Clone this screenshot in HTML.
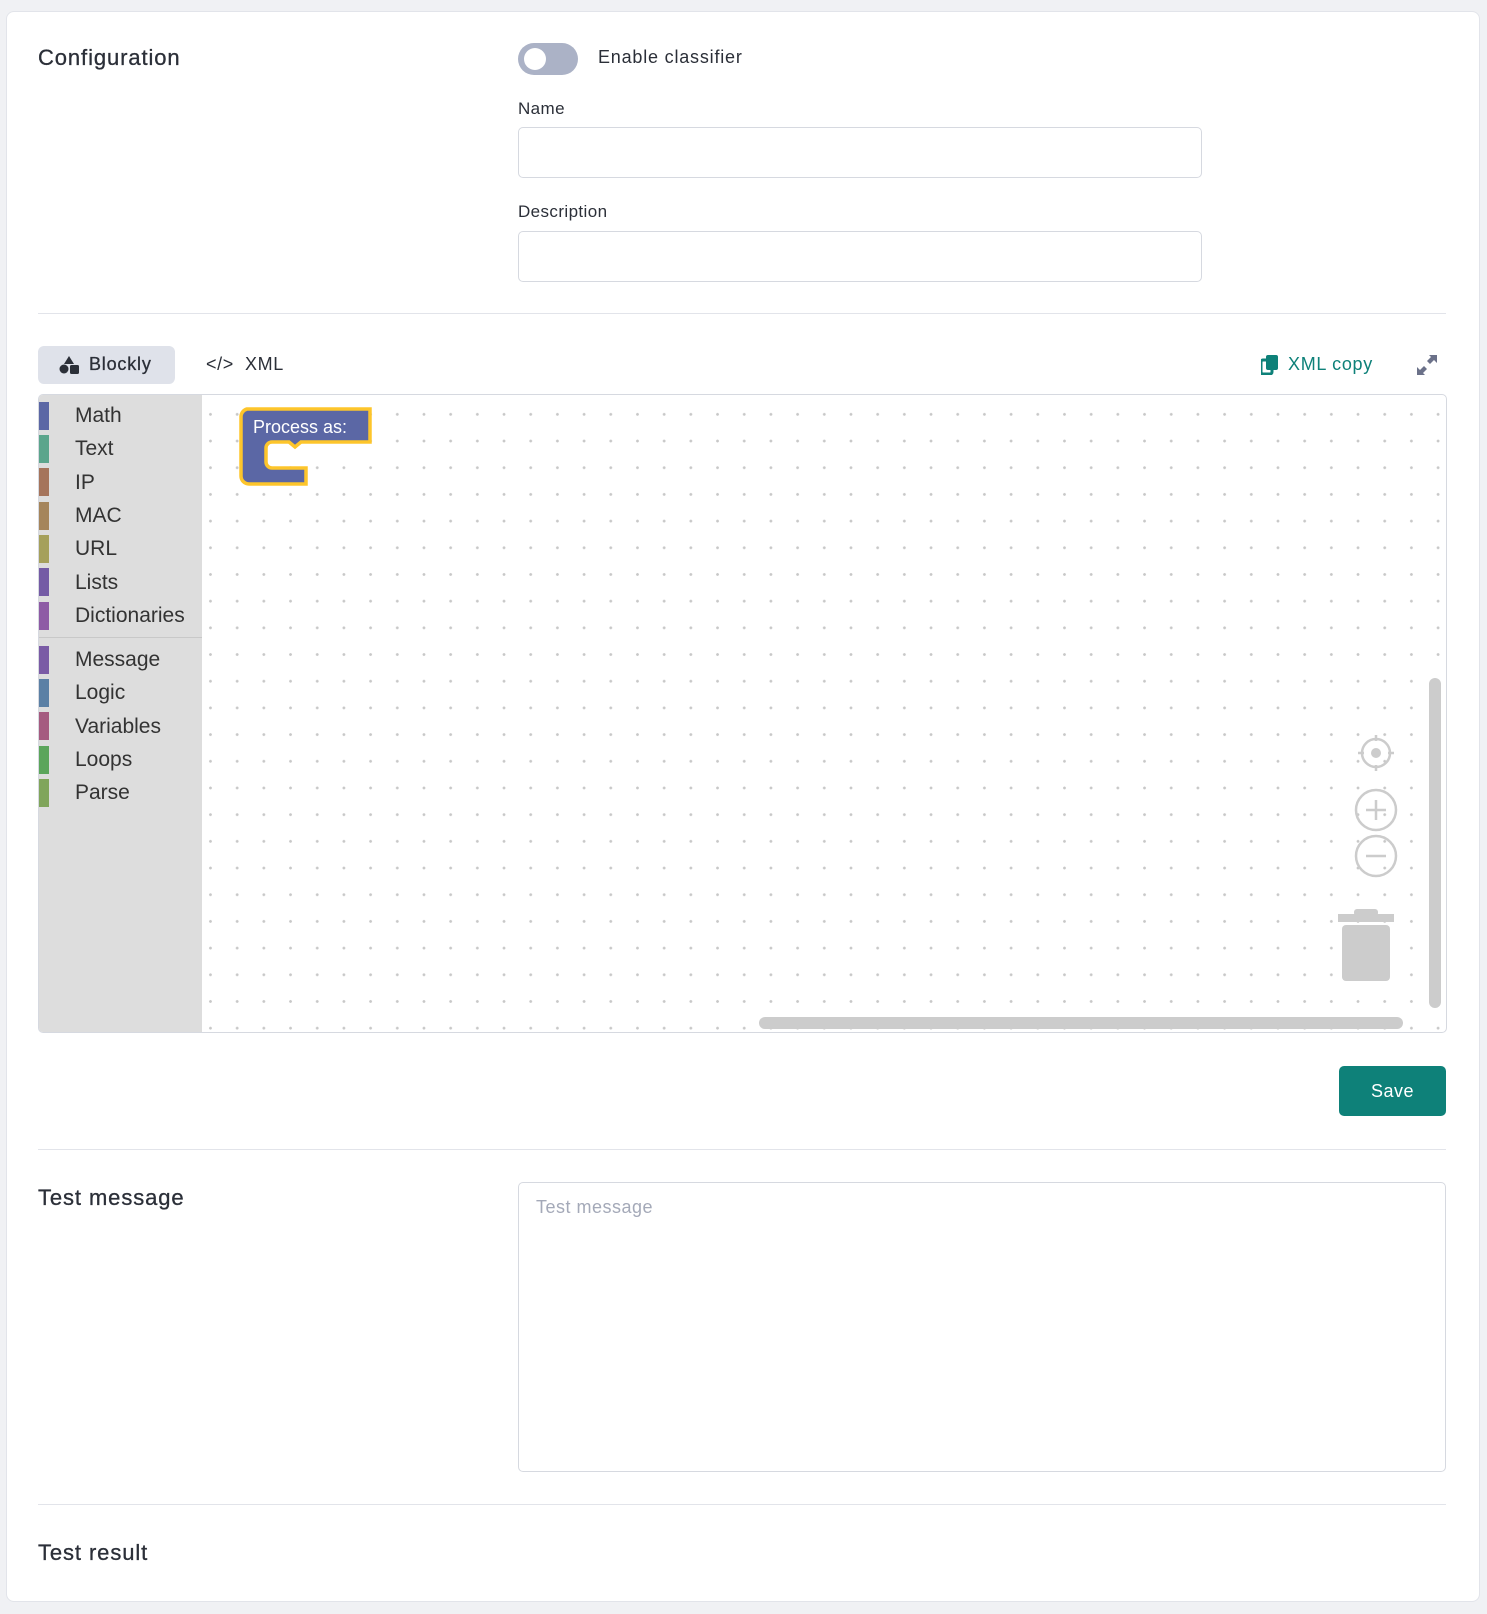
<!DOCTYPE html>
<html><head><style>
body{margin:0;background:#f0f1f4;font-family:"Liberation Sans",sans-serif;color:#2b2f38;}
.card{position:absolute;left:6px;top:11px;width:1472px;height:1589px;background:#fff;border:1px solid #e2e4ea;border-radius:8px;}
.abs{position:absolute}
h2{position:absolute;margin:0;font-weight:normal;font-size:22px;color:#2b2f38;letter-spacing:0.9px;-webkit-text-stroke:0.3px #2b2f38}
.lbl{position:absolute;font-size:17px;color:#2b2f38;letter-spacing:0.4px}
.inp{position:absolute;border:1px solid #d6d9e0;border-radius:5px;background:#fff}
.hr{position:absolute;left:38px;width:1408px;height:1px;background:#e2e4ea}
.tb{position:absolute;left:0;width:10px;height:28px}
.ti{position:absolute;left:36px;font-size:21px;color:#333}
</style></head><body>
<div class="card"></div>
<h2 style="left:38px;top:45px">Configuration</h2>
<div class="abs" style="left:518px;top:43px;width:60px;height:32px;border-radius:16px;background:#abb2c6"></div>
<div class="abs" style="left:524px;top:48px;width:22px;height:22px;border-radius:50%;background:#fff"></div>
<div class="lbl" style="left:598px;top:47px;font-size:18px;letter-spacing:0.8px">Enable classifier</div>
<div class="lbl" style="left:518px;top:99px">Name</div>
<div class="inp" style="left:518px;top:127px;width:682px;height:49px"></div>
<div class="lbl" style="left:518px;top:202px">Description</div>
<div class="inp" style="left:518px;top:231px;width:682px;height:49px"></div>
<div class="hr" style="top:313px"></div>
<div class="abs" style="left:38px;top:346px;width:137px;height:38px;border-radius:6px;background:#dfe2ea"></div>
<svg class="abs" style="left:59px;top:356px" width="20" height="18" viewBox="0 0 20 18"><polygon points="10,0 15,8 5,8" fill="#2b2f38"/><circle cx="5" cy="13" r="4.5" fill="#2b2f38"/><rect x="11" y="9" width="9" height="9" rx="1.5" fill="#2b2f38"/></svg>
<div class="lbl" style="left:89px;top:354px;font-size:18px;letter-spacing:0.8px;-webkit-text-stroke:0.3px #2b2f38">Blockly</div>
<div class="lbl" style="left:206px;top:354px;font-size:18px;letter-spacing:0.6px">&lt;/&gt;&nbsp; XML</div>
<svg class="abs" style="left:1261px;top:355px" width="18" height="20" viewBox="0 0 18 20"><rect x="0" y="5" width="11" height="14" rx="2" fill="none" stroke="#0e8179" stroke-width="3"/><rect x="5" y="0" width="12" height="15" rx="2" fill="#0e8179"/></svg>
<div class="lbl" style="left:1288px;top:354px;font-size:18px;color:#0e8179;letter-spacing:0.7px">XML copy</div>
<svg class="abs" style="left:1415px;top:353px" width="24" height="24" viewBox="0 0 24 24"><path d="M14 2h8v8l-3-3-4 4-3-3 4-4zM10 22H2v-8l3 3 4-4 3 3-4 4z" fill="#6b7189"/></svg>
<div class="abs" style="left:38px;top:394px;width:1407px;height:637px;border:1px solid #d6d9e0;border-radius:5px;overflow:hidden;background-color:#fff;background-image:radial-gradient(circle,#c8c8c8 1.2px,transparent 1.6px);background-size:26.7px 26.7px;background-position:-2px 6px">
 <div class="abs" style="left:0;top:0;width:163px;height:640px;background:#dddddd">
  <div class="tb" style="top:7px;background:#5b67a5"></div><div class="ti" style="top:9px">Math</div>
  <div class="tb" style="top:40px;background:#5ba58c"></div><div class="ti" style="top:42px">Text</div>
  <div class="tb" style="top:73px;background:#a5745b"></div><div class="ti" style="top:76px">IP</div>
  <div class="tb" style="top:107px;background:#a5855b"></div><div class="ti" style="top:109px">MAC</div>
  <div class="tb" style="top:140px;background:#a5a05b"></div><div class="ti" style="top:142px">URL</div>
  <div class="tb" style="top:173px;background:#745ba5"></div><div class="ti" style="top:176px">Lists</div>
  <div class="tb" style="top:207px;background:#8e5ba5"></div><div class="ti" style="top:209px">Dictionaries</div>
  <div class="abs" style="left:0;top:242px;width:163px;height:1px;background:#c8c8c8"></div>
  <div class="tb" style="top:251px;background:#7a5ba5"></div><div class="ti" style="top:253px">Message</div>
  <div class="tb" style="top:284px;background:#5b80a5"></div><div class="ti" style="top:286px">Logic</div>
  <div class="tb" style="top:317px;background:#a55b80"></div><div class="ti" style="top:320px">Variables</div>
  <div class="tb" style="top:351px;background:#5ba55b"></div><div class="ti" style="top:353px">Loops</div>
  <div class="tb" style="top:384px;background:#80a55b"></div><div class="ti" style="top:386px">Parse</div>
 </div>
 <svg class="abs" style="left:200px;top:12px" width="135" height="88" viewBox="0 0 135 88"><path d="M8 2h123v33H62l-6 5-6-5H33a6 6 0 0 0-6 6v14a6 6 0 0 0 6 6h34v16H10a8 8 0 0 1-8-8V10a8 8 0 0 1 6-8z" fill="#5b67a5" stroke="#fdc52b" stroke-width="3.5"/><text x="14" y="26" font-family="Liberation Sans" font-size="18" fill="#fff">Process as:</text></svg>
 <svg class="abs" style="left:1314px;top:338px" width="46" height="160" viewBox="0 0 46 160"><g fill="none" stroke="#cccccc" stroke-width="2.5"><circle cx="23" cy="20" r="14"/><path d="M23 2v6M23 32v6M5 20h6M35 20h6"/><circle cx="23" cy="77" r="20"/><path d="M23 67v20M13 77h20"/><circle cx="23" cy="123" r="20"/><path d="M13 123h20"/></g><circle cx="23" cy="20" r="5" fill="#cccccc"/></svg>
 <svg class="abs" style="left:1299px;top:512px" width="60" height="75" viewBox="0 0 60 75"><rect x="0" y="7" width="56" height="8" fill="#cccccc"/><rect x="16" y="2" width="24" height="7" rx="3" fill="#cccccc"/><rect x="4" y="18" width="48" height="56" rx="4" fill="#cccccc"/></svg>
 <div class="abs" style="left:1390px;top:283px;width:12px;height:330px;border-radius:6px;background:#cccccc"></div>
 <div class="abs" style="left:720px;top:622px;width:644px;height:12px;border-radius:6px;background:#cccccc"></div>
</div>
<div class="abs" style="left:1339px;top:1066px;width:107px;height:50px;border-radius:5px;background:#0e8179;color:#fff;font-size:18px;text-align:center;line-height:50px;letter-spacing:0.5px">Save</div>
<div class="hr" style="top:1149px"></div>
<h2 style="left:38px;top:1185px">Test message</h2>
<div class="inp" style="left:518px;top:1182px;width:926px;height:288px"><div style="position:absolute;left:17px;top:14px;font-size:18px;color:#a4a9b8;letter-spacing:0.5px">Test message</div></div>
<div class="hr" style="top:1504px"></div>
<h2 style="left:38px;top:1540px">Test result</h2>
</body></html>
